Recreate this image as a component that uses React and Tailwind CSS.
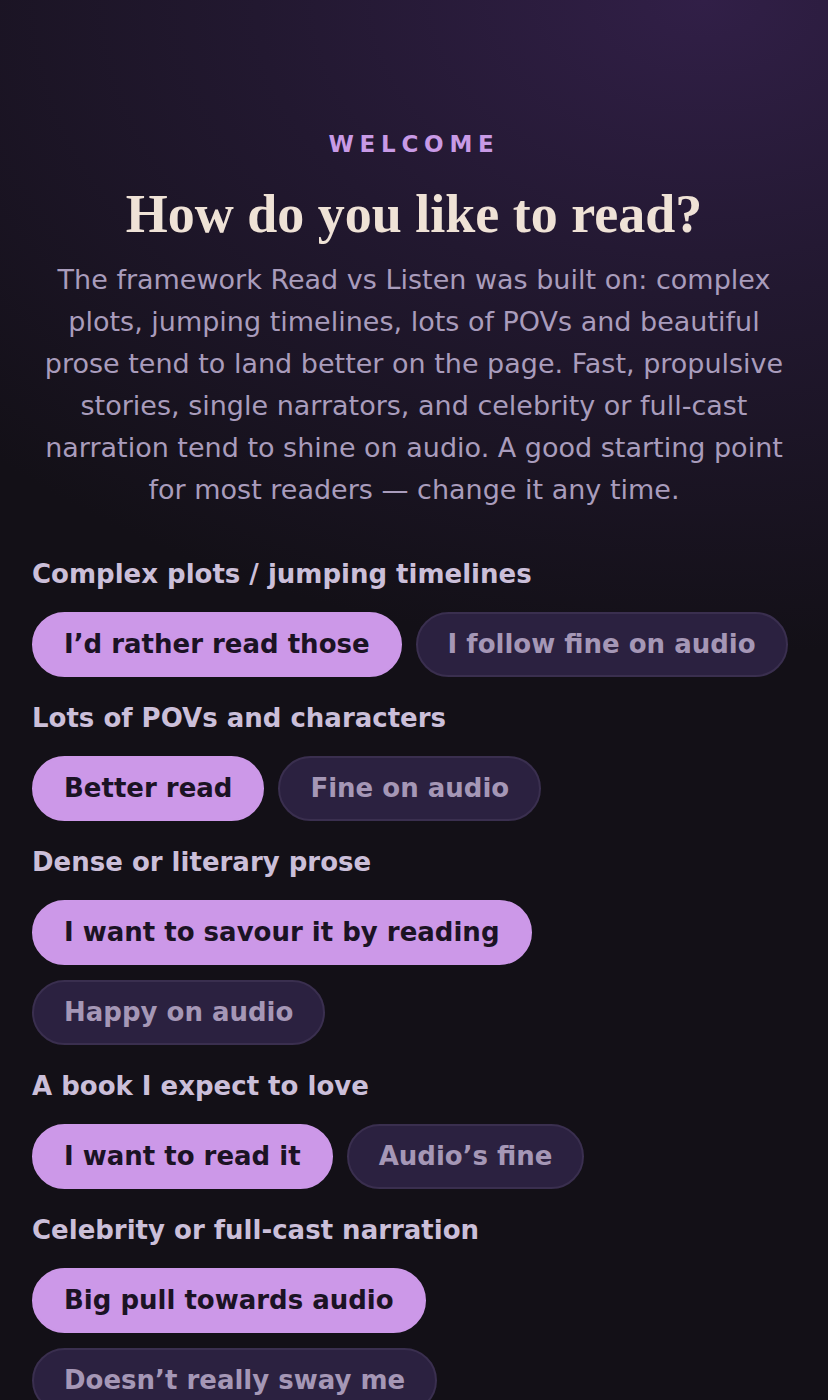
import { useState } from 'react';

const questions = [
  { label: 'Complex plots / jumping timelines', options: ['I’d rather read those', 'I follow fine on audio'] },
  { label: 'Lots of POVs and characters', options: ['Better read', 'Fine on audio'] },
  { label: 'Dense or literary prose', options: ['I want to savour it by reading', 'Happy on audio'] },
  { label: 'A book I expect to love', options: ['I want to read it', 'Audio’s fine'] },
  { label: 'Celebrity or full-cast narration', options: ['Big pull towards audio', 'Doesn’t really sway me'] },
];

function Question({ label, options }) {
  const [picked, setPicked] = useState(0);

  return (
    <div className="flex flex-col">
      <h3 className="text-[26px] font-bold text-[#cbbfd9] leading-[34px]">{label}</h3>
      <div className="flex flex-wrap gap-x-[14px] gap-y-[15px] mt-[21px]">
        {options.map((opt, i) => (
          <button
            key={opt}
            onClick={() => setPicked(i)}
            className={
              i === picked
                ? 'h-[65px] px-[30px] rounded-full bg-[#cc98e8] border-2 border-[#cc98e8] text-[#1b1324] text-[26px] font-bold'
                : 'h-[65px] px-[30px] rounded-full bg-[#2b2140] border-2 border-[#3a2f4f] text-[#a597b6] text-[26px] font-bold'
            }
          >
            {opt}
          </button>
        ))}
      </div>
    </div>
  );
}

export default function App() {
  return (
    <div className="min-h-[1400px] bg-[#131017] bg-[radial-gradient(ellipse_120%_45%_at_85%_0%,#311f47_0%,#221830_45%,#131017_100%)] font-['DejaVu_Sans',sans-serif]">
      <div className="px-[32px] pt-[130px] pb-[40px]">
        <div className="text-center">
          <p className="text-[23px] font-bold tracking-[0.25em] text-[#c89ae6] leading-[28px]">WELCOME</p>
          <h1 className="mt-[26px] font-['Liberation_Serif',serif] font-bold text-[54px] leading-[60px] text-[#efe2d6]">
            How do you like to read?
          </h1>
          <p className="mt-[15px] text-[27px] leading-[42px] text-[#a99cbc]">
            The framework Read vs Listen was built on: complex plots, jumping timelines, lots of POVs and beautiful
            prose tend to land better on the page. Fast, propulsive stories, single narrators, and celebrity or
            full-cast narration tend to shine on audio. A good starting point for most readers — change it any time.
          </p>
        </div>

        <div className="mt-[46px] flex flex-col gap-[24px]">
          {questions.map((q) => (
            <Question key={q.label} label={q.label} options={q.options} />
          ))}
        </div>
      </div>
    </div>
  );
}
